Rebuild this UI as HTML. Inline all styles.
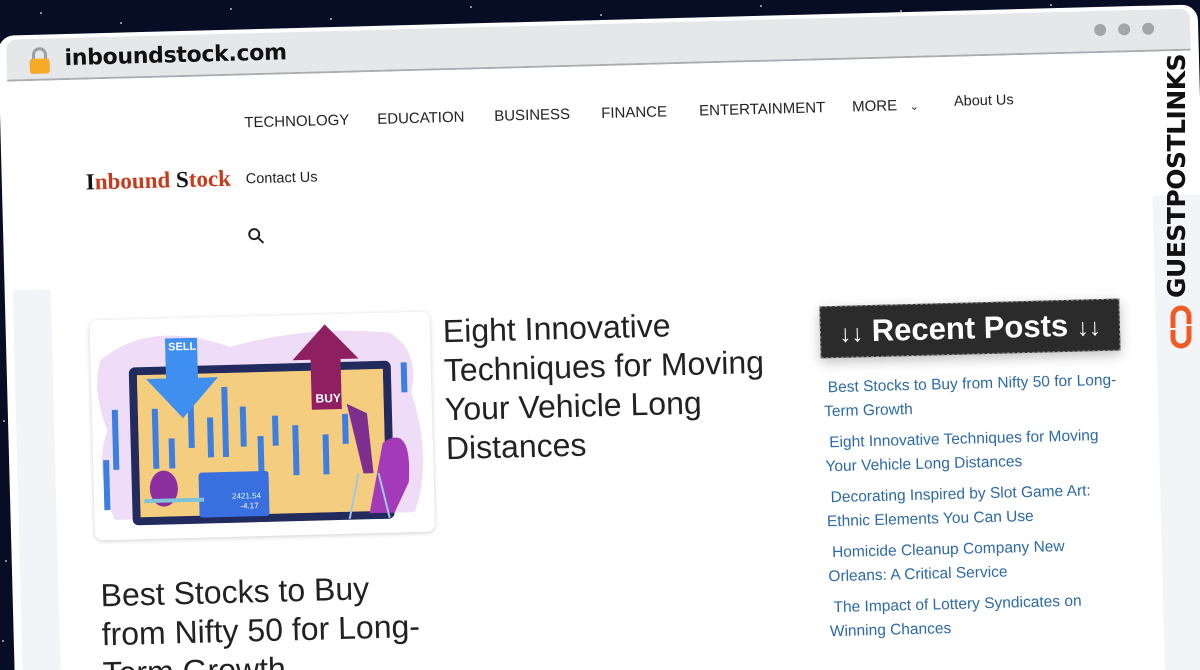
<!DOCTYPE html>
<html style="width:1200px;height:670px;overflow:hidden"><head><meta charset="utf-8"><style>
*{margin:0;padding:0;box-sizing:border-box}
body{width:1200px;height:670px;overflow:hidden;background:#080d26;font-family:"Liberation Sans",sans-serif;position:relative}
#clip{position:absolute;left:0;top:0;width:1200px;height:670px;overflow:hidden}
.star{position:absolute;width:2px;height:2px;background:#fff;border-radius:50%;opacity:.7}
#page{position:absolute;left:6px;top:20px;width:1200px;height:680px;background:#fff;border-radius:16px;transform:rotate(-1.5deg);transform-origin:600px 315px;overflow:hidden}
.a{position:absolute;white-space:nowrap}
.bar{left:8px;top:4px;width:1184px;height:42px;background:#e6e7e9;border-bottom:2px solid #a9acb1;border-radius:10px 10px 0 0}
.nav{font-size:15px;color:#222}
.t{font-size:32px;color:#222;line-height:39px;white-space:normal}
.lk{font-size:15.5px;color:#2d6aa5;line-height:24px;white-space:normal;width:300px}
</style></head><body><div id="clip">
<div class="star" style="left:40px;top:12px"></div><div class="star" style="left:120px;top:22px"></div><div class="star" style="left:230px;top:8px"></div><div class="star" style="left:330px;top:18px"></div><div class="star" style="left:470px;top:6px"></div><div class="star" style="left:600px;top:14px"></div><div class="star" style="left:760px;top:5px"></div><div class="star" style="left:900px;top:10px"></div><div class="star" style="left:1050px;top:4px"></div><div class="star" style="left:3px;top:420px"></div><div class="star" style="left:5px;top:560px"></div><div class="star" style="left:2px;top:640px"></div>
<div id="page">
 <div class="a bar"></div>
 <svg class="a" style="left:30px;top:12px" width="22" height="28" viewBox="0 0 22 28"><path d="M5 13V8a6 6 0 0 1 12 0v5" fill="none" stroke="#9b9ea3" stroke-width="3"/><rect x="1" y="12" width="20" height="15" rx="3" fill="#f7a928"/></svg>
 <div class="a" style="left:66px;top:12px;font-size:22px;font-weight:bold;color:#111;font-family:'DejaVu Sans',sans-serif;letter-spacing:-.3px">inboundstock.com</div>
 <div class="a" style="left:1096px;top:17px;width:12px;height:12px;border-radius:50%;background:#a3a5a9"></div>
 <div class="a" style="left:1120px;top:17px;width:12px;height:12px;border-radius:50%;background:#a3a5a9"></div>
 <div class="a" style="left:1144px;top:17px;width:12px;height:12px;border-radius:50%;background:#a3a5a9"></div>
 <div class="a" style="left:8px;top:255px;width:38px;height:500px;background:#f3f4f7"></div>
 <div class="a" style="left:1150px;top:190px;width:50px;height:600px;background:#f3f4f7"></div>
 <div class="a" style="left:84px;top:136px;font-family:'Liberation Serif',serif;font-weight:bold;font-size:23px;color:#c83a1c"><span style="color:#111">I</span>nbound <span style="color:#111">S</span>tock</div>
 <div class="a nav" style="left:244px;top:85px">TECHNOLOGY</div>
 <div class="a nav" style="left:377px;top:85px">EDUCATION</div>
 <div class="a nav" style="left:494px;top:85px">BUSINESS</div>
 <div class="a nav" style="left:601px;top:85px">FINANCE</div>
 <div class="a nav" style="left:699px;top:85px">ENTERTAINMENT</div>
 <div class="a nav" style="left:852px;top:85px">MORE &nbsp;&nbsp;<span style="font-size:11px">&#8964;</span></div>
 <div class="a nav" style="left:954px;top:83px;font-size:14.5px">About Us</div>
 <div class="a nav" style="left:244px;top:142px;font-size:14.5px">Contact Us</div>
 <svg class="a" style="left:244px;top:198px" width="18" height="18" viewBox="0 0 18 18"><circle cx="7" cy="7" r="5" fill="none" stroke="#222" stroke-width="2"/><path d="M11 11l5 5" stroke="#222" stroke-width="2"/></svg>
 <svg class="a" style="left:84px;top:287px;border-radius:8px;box-shadow:0 1px 5px rgba(0,0,0,.2)" width="340" height="220" viewBox="0 0 340 220">
  <rect width="340" height="220" fill="#fff"/>
  <path d="M10 40 Q60 0 140 30 Q220 10 300 20 Q330 40 320 80 Q340 150 320 200 L20 200 Q0 150 15 110 Q0 70 10 40Z" fill="#efdcf6"/>
  <rect x="38" y="48" width="262" height="158" rx="6" fill="#222a5e"/>
  <rect x="46" y="56" width="246" height="142" fill="#f7d88c"/>
  <path d="M46 56h246v142H46z" fill="#f4c26f" opacity=".5"/>
  <g fill="#3d7fe0"><rect x="60" y="90" width="6" height="60"/><rect x="76" y="120" width="6" height="30"/><rect x="96" y="80" width="6" height="50"/><rect x="115" y="100" width="6" height="40"/><rect x="130" y="70" width="6" height="70"/><rect x="148" y="90" width="6" height="40"/><rect x="165" y="120" width="6" height="50"/><rect x="180" y="100" width="6" height="30"/><rect x="200" y="110" width="6" height="50"/><rect x="230" y="120" width="6" height="40"/><rect x="250" y="100" width="6" height="30"/><rect x="20" y="90" width="6" height="60"/><rect x="10" y="140" width="6" height="50"/><rect x="310" y="50" width="6" height="30"/></g>
  <path d="M75 20h32v40h20l-36 40-36-40h20z" fill="#3e8ff0"/><text x="78" y="32" font-family="Liberation Sans" font-weight="bold" font-size="11" fill="#fff">SELL</text>
  <path d="M220 95h30V45h18l-33-35-33 35h18z" fill="#8e2062"/><text x="224" y="88" font-family="Liberation Sans" font-weight="bold" font-size="12" fill="#fff">BUY</text>
  <rect x="105" y="155" width="70" height="45" rx="3" fill="#3a6fe0"/><text x="138" y="182" font-family="Liberation Sans" font-size="8" fill="#cfe">2421.54</text><text x="146" y="192" font-family="Liberation Sans" font-size="8" fill="#fff">-4.17</text>
  <ellipse cx="70" cy="170" rx="14" ry="18" fill="#8a2ea0"/><rect x="50" y="180" width="60" height="4" fill="#7ec4d8"/>
  <path d="M255 90l20 10 5 60-10 0z" fill="#7d2e8f"/>
  <path d="M290 130q30-20 25 40l-15 30h-25z" fill="#a33bb9"/>
  <path d="M265 160l-10 45M285 160l10 45" stroke="#9fc7e8" stroke-width="2"/>
 </svg>
 <div class="a t" style="left:437px;top:288px;width:345px">Eight Innovative Techniques for Moving Your Vehicle Long Distances</div>
 <div class="a t" style="left:88px;top:543px;width:320px">Best Stocks to Buy from Nifty 50 for Long-Term Growth</div>
 <div class="a" style="left:814px;top:292px;width:300px;height:52px;background:#2b2b2b;border:1px dashed #888;box-shadow:0 4px 12px rgba(0,0,0,.25);color:#fff;font-weight:bold;font-size:31px;line-height:50px;text-align:center"><span style="font-size:24px;font-weight:normal">↓↓</span> Recent Posts <span style="font-size:24px;font-weight:normal">↓↓</span></div>
 <div class="a lk" style="left:816px;top:362px">&nbsp;Best Stocks to Buy from Nifty 50 for Long-Term Growth</div>
 <div class="a lk" style="left:816px;top:417px;width:285px">&nbsp;Eight Innovative Techniques for Moving Your Vehicle Long Distances</div>
 <div class="a lk" style="left:816px;top:472px">&nbsp;Decorating Inspired by Slot Game Art: Ethnic Elements You Can Use</div>
 <div class="a lk" style="left:816px;top:527px;width:260px">&nbsp;Homicide Cleanup Company New Orleans: A Critical Service</div>
 <div class="a lk" style="left:816px;top:582px;width:280px">&nbsp;The Impact of Lottery Syndicates on Winning Chances</div>
</div>
<div style="position:absolute;left:1162px;top:298px;transform:rotate(-90deg);transform-origin:0 0;font-family:'DejaVu Sans',sans-serif;font-weight:bold;font-size:25px;color:#111;letter-spacing:-.5px;white-space:nowrap">GUESTPOSTLINKS</div>
<svg style="position:absolute;left:1168px;top:304px" width="26" height="46" viewBox="0 0 26 46"><path d="M5 24V12a8 8 0 0 1 16 0v8M21 22v12a8 8 0 0 1-16 0v-8" fill="none" stroke="#f05a24" stroke-width="5"/></svg>
</div></body></html>
